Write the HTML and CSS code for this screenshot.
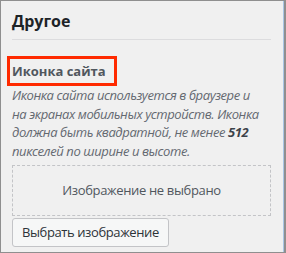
FILE: index.html
```html
<!DOCTYPE html>
<html lang="ru">
<head>
<meta charset="utf-8">
<link rel="stylesheet" href="styles.css">
</head>
<body>
<div class="panel">
  <h2 class="panel-title">Другое</h2>
  <div class="field">
    <div class="field-label"><span class="highlight">Иконка сайта</span></div>
    <p class="field-desc">Иконка сайта используется в браузере и<br>на экранах мобильных устройств. Иконка<br>должна быть квадратной, не менее <strong>512</strong><br>пикселей по ширине и высоте.</p>
    <div class="placeholder">Изображение не выбрано</div>
    <div class="actions"><button class="btn">Выбрать изображение</button></div>
  </div>
</div>
</body>
</html>
```

FILE: styles.css
```css
html, body {
  margin: 0;
  padding: 0;
  background: #f0f0f0;
}
.panel {
  box-sizing: border-box;
  width: 286px;
  height: 253px;
  background: #f0f0f0;
  border-top: 1px solid #8f8f8f;
  border-left: 1px solid #8f8f8f;
  border-right: 2px solid #8f8f8f;
  border-bottom: 1px solid #8f8f8f;
  box-shadow: inset -1px 0 0 #a9c6e6;
  padding: 0 13px 0 11px;
  font-family: "Open Sans", "Noto Sans", sans-serif;
  color: #3c434a;
  overflow: hidden;
}
.panel-title {
  margin: 0;
  padding: 11px 0 9px;
  font-size: 16px;
  line-height: 18px;
  font-weight: 700;
  color: #1d2327;
  border-bottom: 1px solid #dcdcde;
}
.field {
  padding-top: 16px;
}
.field-label {
  font-size: 13px;
  font-weight: 700;
  color: #50575e;
  line-height: 18px;
}
.highlight {
  display: inline-block;
  margin-left: -5px;
  padding: 3px 8px 3px 2px;
  border: 3px solid #ff2a00;
}
.field-desc {
  margin: 0 -4px 0 0;
  font-size: 13px;
  font-style: italic;
  line-height: 18.7px;
  color: #646970;
  letter-spacing: -0.4px;
  white-space: nowrap;
}
.field-desc strong {
  color: #3c434a;
}
.placeholder {
  margin-top: 4px;
  height: 49px;
  border: 1px dashed #c3c4c7;
  display: flex;
  align-items: center;
  justify-content: center;
  font-size: 13px;
  letter-spacing: -0.35px;
  color: #50575e;
}
.actions {
  display: flex;
  margin-top: 2px;
}
.btn {
  height: 29px;
  padding: 0 9px;
  font-family: inherit;
  font-size: 13px;
  letter-spacing: -0.4px;
  color: #2c3338;
  background: #f6f7f7;
  border: 1px solid #c3c4c7;
  border-radius: 3px;
}
```
